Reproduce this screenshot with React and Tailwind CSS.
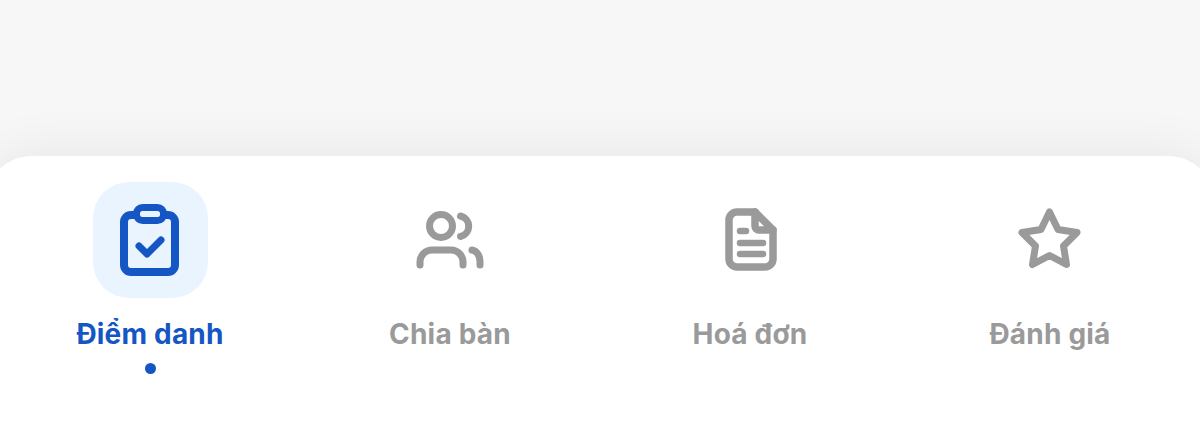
const BLUE = "#1556c5";

function ClipboardIcon() {
  return (
    <svg width="80" height="80" viewBox="0 0 80 80" fill="none" stroke={BLUE} strokeWidth="8" strokeLinecap="round" strokeLinejoin="round">
      <rect x="14" y="15" width="51" height="57" rx="7" />
      <rect x="26.5" y="7.5" width="27" height="13" rx="6" fill="#eaf4fe" strokeWidth="7" />
      <path d="M29 46l8 8 14-14" strokeWidth="7" />
    </svg>
  );
}

function PeopleIcon() {
  return (
    <svg width="80" height="80" viewBox="0 0 80 80" fill="none" stroke="#9a9a9a" strokeWidth="7" strokeLinecap="round" strokeLinejoin="round">
      <circle cx="31" cy="26" r="11.5" />
      <path d="M50.5 16a10.5 10.5 0 0 1 0 20.5" />
      <path d="M10 65v-3a12 12 0 0 1 12-12h19a12 12 0 0 1 12 12v3" />
      <path d="M62 50c5 1 8 6 8 11v4" />
    </svg>
  );
}

function InvoiceIcon() {
  return (
    <svg width="80" height="80" viewBox="0 0 80 80" fill="none" stroke="#9a9a9a" strokeWidth="7.5" strokeLinecap="round" strokeLinejoin="round">
      <path d="M27 12h18l18 18v29a8 8 0 0 1-8 8H27a8 8 0 0 1-8-8V20a8 8 0 0 1 8-8z" />
      <path d="M45 12v14a4 4 0 0 0 4 4h14" />
      <path d="M30 31h6M30 43h23M30 54h23" strokeWidth="6.5" />
    </svg>
  );
}

function StarIcon() {
  return (
    <svg width="80" height="80" viewBox="0 0 80 80" fill="none" stroke="#9a9a9a" strokeWidth="7" strokeLinecap="round" strokeLinejoin="round">
      <path d="M39.5 12l8.5 17.5 19 3-13.5 13.5 3 18.5-17-9-17 9 3-18.5-13.5-13.5 19-3z" />
    </svg>
  );
}

const tabs = [
  { label: "Điểm danh", icon: <ClipboardIcon />, active: true },
  { label: "Chia bàn", icon: <PeopleIcon /> },
  { label: "Hoá đơn", icon: <InvoiceIcon /> },
  { label: "Đánh giá", icon: <StarIcon /> },
];

export default function App() {
  return (
    <div className="flex h-[444px] w-[1200px] flex-col overflow-hidden bg-[#f7f7f7] pt-[156px] font-['Inter',sans-serif]">
      {/* panel runs past the screen edges, only part of each corner shows */}
      <nav className="-mx-4 grid flex-1 grid-cols-4 rounded-t-[48px] bg-white px-4 pt-[26px] shadow-[0_-8px_48px_rgba(0,0,0,0.06)]">
        {tabs.map((tab) => (
          <div key={tab.label} className="flex flex-col items-center">
            <div className={`flex h-[116px] w-[115px] items-center justify-center rounded-[36px] ${tab.active ? "bg-[#eaf4fe]" : ""}`}>
              {tab.icon}
            </div>
            <span className={`mt-[18px] text-[28px] leading-9 font-bold tracking-[0.2px] ${tab.active ? "text-[#1556c5]" : "text-[#9a9a9a]"}`}>
              {tab.label}
            </span>
            <span className={`mt-[11px] h-[11px] w-[11px] rounded-full ${tab.active ? "bg-[#1556c5]" : "hidden"}`} />
          </div>
        ))}
      </nav>
    </div>
  );
}
